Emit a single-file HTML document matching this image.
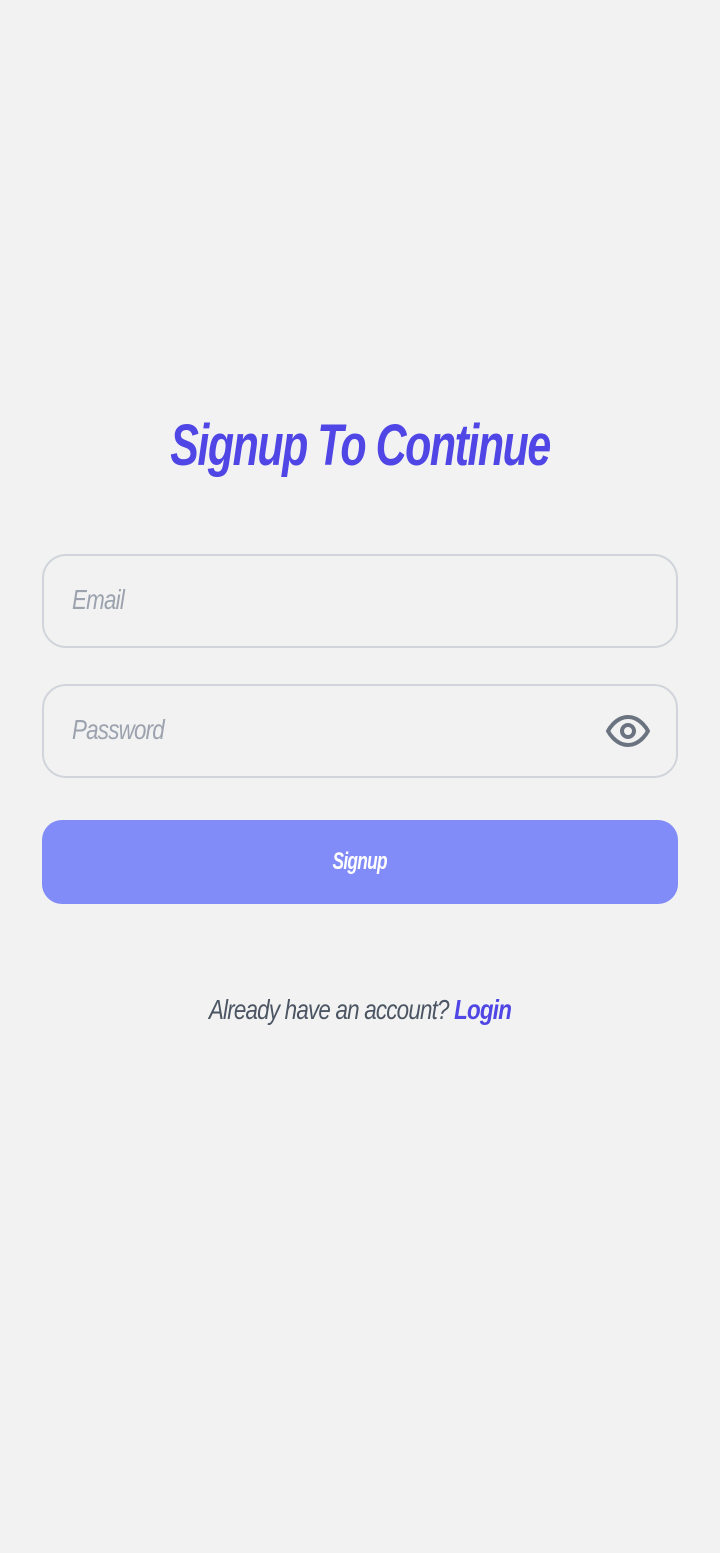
<!DOCTYPE html>
<html><head><meta charset="utf-8"><style>
html,body{margin:0;padding:0;background:#f2f2f2;width:720px;height:1553px;overflow:hidden;font-family:"Liberation Sans",sans-serif;}
.title{position:absolute;top:412px;left:0;width:720px;text-align:center;color:#4f46e5;font-size:58px;font-weight:bold;font-style:italic;letter-spacing:-2px;transform:scaleX(0.74);}
.inp{position:absolute;left:42px;width:632px;height:90px;border:2px solid #d1d5db;border-radius:24px;box-sizing:content-box;}
.ph{position:absolute;left:28px;top:28px;color:#9ca3af;font-size:28px;font-style:italic;letter-spacing:-1px;transform:scaleX(0.8);transform-origin:left center;}
.btn{position:absolute;left:42px;top:820px;width:636px;height:84px;background:#818cf8;border-radius:20px;color:#fff;font-weight:bold;font-style:italic;font-size:24px;text-align:center;line-height:84px;letter-spacing:-1px;}
.btn span{display:inline-block;transform:scaleX(0.72);}
.foot{position:absolute;top:994px;left:0;width:720px;text-align:center;font-size:28px;font-style:italic;color:#4b5563;letter-spacing:-1px;transform:scaleX(0.8);}
.foot b{color:#4f46e5;}
</style></head><body>
<div class="title">Signup To Continue</div>
<div class="inp" style="top:554px;width:632px;height:90px"><div class="ph">Email</div></div>
<div class="inp" style="top:684px;width:632px;height:90px"><div class="ph">Password</div>
<svg style="position:absolute;left:560px;top:21px" width="48" height="48" viewBox="0 0 24 24" fill="none" stroke="#6b7280" stroke-width="2" stroke-linecap="round" stroke-linejoin="round"><path d="M2 12s3.5-7 10-7 10 7 10 7-3.5 7-10 7S2 12 2 12z"/><circle cx="12" cy="12" r="3"/></svg>
</div>
<div class="btn"><span>Signup</span></div>
<div class="foot">Already have an account? <b>Login</b></div>
</body></html>
